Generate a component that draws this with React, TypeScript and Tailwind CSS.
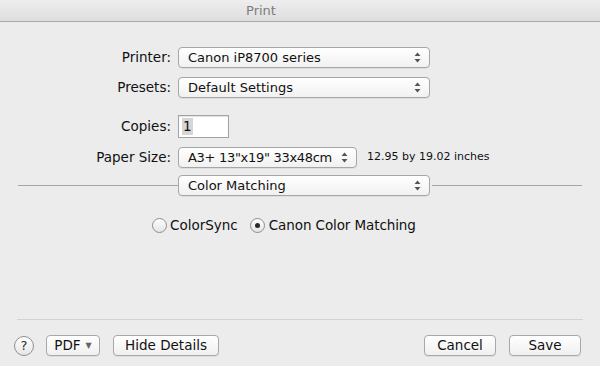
import React from "react";

const font = "font-['DejaVu_Sans','Liberation_Sans',sans-serif]";

const Arrows = () => (
    <svg width="7" height="11" viewBox="0 0 7 11" className="shrink-0">
        <path d="M3.5 0.5 L6.5 4 L0.5 4 Z" fill="#555" />
        <path d="M3.5 10.5 L6.5 7 L0.5 7 Z" fill="#555" />
    </svg>
);

const Popup = ({ label, width, tight }: { label: string; width: string; tight?: boolean }) => (
    <div
        className={`${width} h-[21px] flex items-center justify-between pl-[9px] pr-[8px] rounded-[4px] border border-[#a6a6a6] bg-gradient-to-b from-[#ffffff] to-[#f1f1f1] shadow-[0_1px_0_rgba(0,0,0,0.06)] text-[13px] text-[#111]`}>
        <span className={`whitespace-nowrap ${tight ? "tracking-[-0.3px]" : ""}`}>{label}</span>
        <Arrows />
    </div>
);

const Label = ({ children }: { children: React.ReactNode }) => (
    <div className="w-[172px] pr-[1px] text-right text-[13.5px] text-[#111] shrink-0">
        {children}
    </div>
);

const Radio = ({ checked }: { checked?: boolean }) => (
    <div className="w-[15px] h-[15px] rounded-full border border-[#8e8e8e] bg-gradient-to-b from-[#ffffff] to-[#e4e4e4] flex items-center justify-center shrink-0">
        {checked && <div className="w-[5px] h-[5px] rounded-full bg-[#2a2a2a]" />}
    </div>
);

const Button = ({ children, width }: { children: React.ReactNode; width: string }) => (
    <div
        className={`${width} h-[21px] flex items-center justify-center rounded-[4px] border border-[#a8a8a8] bg-gradient-to-b from-[#ffffff] to-[#f0f0f0] shadow-[0_1px_0_rgba(0,0,0,0.06)] text-[13.5px] text-[#111]`}>
        {children}
    </div>
);

export default function App() {
    return (
        <div className={`${font} w-[600px] h-[366px] bg-[#ececec] flex flex-col overflow-hidden`}>
            {/* title bar */}
            <div className="h-[22px] shrink-0 flex items-center justify-center pr-[78px] bg-gradient-to-b from-[#eeeeee] to-[#dedede] border-b border-[#a9a9a9] text-[13px] text-[#7c7c7c]">
                Print
            </div>

            <div className="flex flex-col pt-[25px]">
                <div className="flex items-center gap-[6px]">
                    <Label>Printer:</Label>
                    <Popup label="Canon iP8700 series" width="w-[252px]" />
                </div>
                <div className="flex items-center gap-[6px] mt-[9px]">
                    <Label>Presets:</Label>
                    <Popup label="Default Settings" width="w-[252px]" />
                </div>
                <div className="flex items-center gap-[6px] mt-[17px]">
                    <Label>Copies:</Label>
                    <div className="w-[51px] h-[23px] bg-white border border-[#a3a3a3] shadow-[inset_0_1px_1px_rgba(0,0,0,0.12)] flex items-center pl-[3px] text-[13.5px] text-[#111]">
                        <span className="bg-[#d6d6d6] px-[1px] leading-[17px]">1</span>
                    </div>
                </div>
                <div className="flex items-center gap-[6px] mt-[9px]">
                    <Label>Paper Size:</Label>
                    <Popup label={'A3+ 13"x19" 33x48cm'} width="w-[179px]" tight />
                    <span className="ml-[4px] text-[11px] text-[#111] whitespace-nowrap">12.95 by 19.02 inches</span>
                </div>

                {/* separator with pane popup */}
                <div className="flex items-center mt-[7px]">
                    <div className="w-[160px] ml-[18px] h-px bg-[#a5a5a5]" />
                    <Popup label="Color Matching" width="w-[252px]" />
                    <div className="w-[150px] ml-[2px] h-px bg-[#a5a5a5]" />
                </div>

                <div className="flex items-center mt-[19px] pl-[152px] text-[13.5px] text-[#111]">
                    <Radio />
                    <span className="ml-[3px]">ColorSync</span>
                    <div className="ml-[12px]">
                        <Radio checked />
                    </div>
                    <span className="ml-[4px] tracking-[-0.1px]">Canon Color Matching</span>
                </div>
            </div>

            <div className="flex-1" />

            <div className="h-px mx-[17px] bg-[#d2d2d2]" />

            <div className="flex items-center pl-[14px] pr-[19px] pt-[15px] pb-[10px]">
                <div className="w-[20px] h-[20px] rounded-full border border-[#8f8f8f] bg-gradient-to-b from-[#ffffff] to-[#e6e6e6] flex items-center justify-center text-[13px] text-[#2a2a2a]">
                    ?
                </div>
                <div className="ml-[12px]">
                    <Button width="w-[54px]">
                        <span>PDF</span>
                        <span className="ml-[5px] text-[8px] text-[#666]">▼</span>
                    </Button>
                </div>
                <div className="ml-[13px]">
                    <Button width="w-[106px]">Hide Details</Button>
                </div>
                <div className="flex-1" />
                <Button width="w-[72px]">Cancel</Button>
                <div className="ml-[13px]">
                    <Button width="w-[72px]">Save</Button>
                </div>
            </div>
        </div>
    );
}
